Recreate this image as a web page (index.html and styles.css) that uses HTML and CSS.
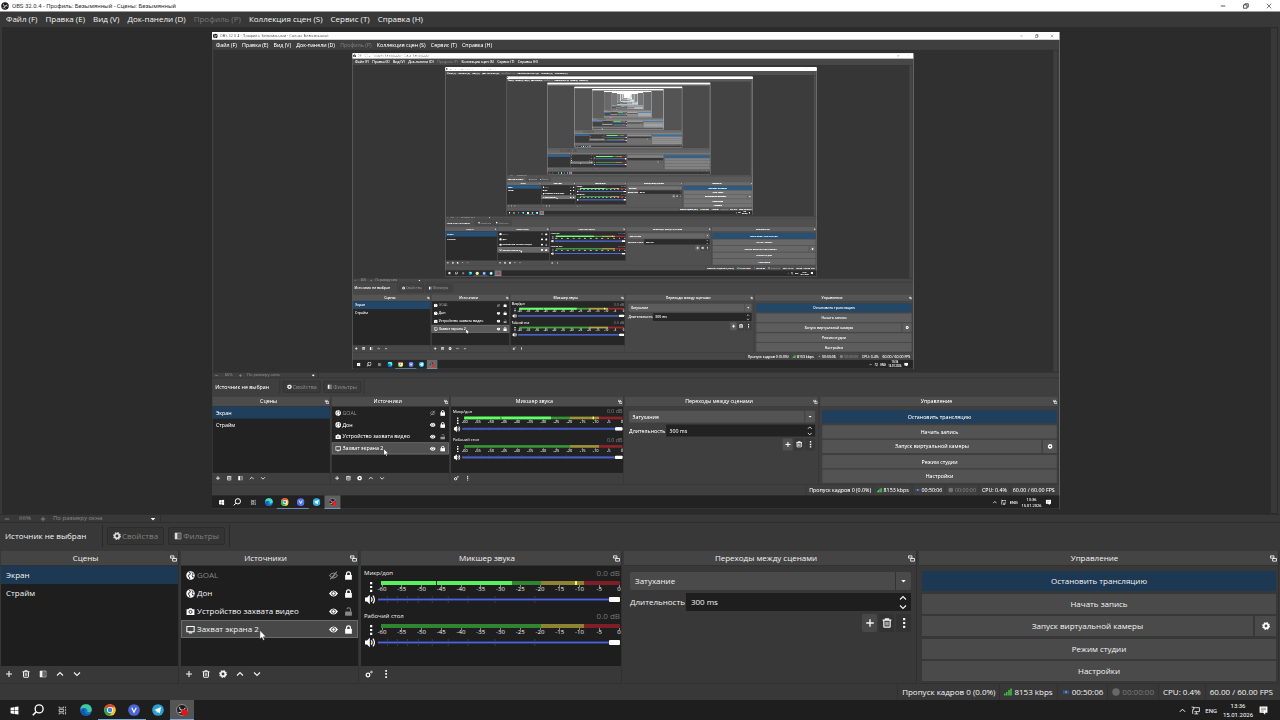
FILE: index.html
```html
<!DOCTYPE html>
<html lang="ru">
  <head>
    <meta charset="utf-8" />
    <title>OBS 32.0.4 - Профиль: Безымянный - Сцены: Безымянный</title>
    <link rel="stylesheet" href="styles.css">
  </head>
  <body>
    <svg class="sprite" aria-hidden="true">
      <symbol id="i-obs" viewBox="0 0 16 16"><circle cx="8" cy="8" r="7.5" fill="#1c1a1d"/><path d="M5 3.5a3.4 3.4 0 0 0 3 4.6 3.4 3.4 0 0 0 4-3.600M13 9a3.400 3.400 0 0 0-5-1 3.400 3.400 0 0 0 .6 5.200M3 11.500a3.400 3.400 0 0 0 4.800-3.300" fill="none" stroke="#c8c6c8" stroke-width="1.600"/></symbol>
      <symbol id="i-plus" viewBox="0 0 16 16"><path d="M8 2v12M2 8h12" fill="none" stroke="currentColor" stroke-width="2.2"/></symbol>
      <symbol id="i-minus" viewBox="0 0 16 16"><path d="M2 8h12" fill="none" stroke="currentColor" stroke-width="2.2"/></symbol>
      <symbol id="i-trash" viewBox="0 0 16 16"><path d="M1 3.500h14M5.500 3V1.500h5V3M3 4v9.500q0 1 1 1h8q1 0 1-1V4" fill="none" stroke="currentColor" stroke-width="2"/><path d="M6.500 6v6M9.500 6v6" stroke="currentColor" stroke-width="1.600"/></symbol>
      <symbol id="i-filter" viewBox="0 0 16 16"><path d="M2 2h12v12H2z" fill="none" stroke="currentColor" stroke-width="1.500" opacity=".7"/><path d="M2 2h5v12H2z" fill="currentColor"/><path d="M9 3h2v10H9z" fill="currentColor" opacity=".5"/></symbol>
      <symbol id="i-up" viewBox="0 0 16 16"><path d="M2 11l6-6 6 6" fill="none" stroke="currentColor" stroke-width="2.2"/></symbol>
      <symbol id="i-down" viewBox="0 0 16 16"><path d="M2 5l6 6 6-6" fill="none" stroke="currentColor" stroke-width="2.2"/></symbol>
      <symbol id="i-caret" viewBox="0 0 16 16"><path d="M2 5h12l-6 7z" fill="currentColor"/></symbol>
      <symbol id="i-gear" viewBox="0 0 16 16"><circle cx="8" cy="8" r="4.600" fill="none" stroke="currentColor" stroke-width="3.600"/><circle cx="8" cy="8" r="6.800" fill="none" stroke="currentColor" stroke-width="2.200" stroke-dasharray="2.800 2.540"/></symbol>
      <symbol id="i-gears" viewBox="0 0 16 16"><circle cx="6" cy="10" r="3.600" fill="none" stroke="currentColor" stroke-width="2.600"/><circle cx="13" cy="4" r="1.700" fill="none" stroke="currentColor" stroke-width="1.600"/><path d="M9 7l2-2" stroke="currentColor" stroke-width="1.500"/></symbol>
      <symbol id="i-dots" viewBox="0 0 16 16"><path d="M6.500 0h3.500v3.500H6.500zM6.500 6.200h3.500v3.500H6.500zM6.500 12.500h3.500V16H6.500z" fill="currentColor"/></symbol>
      <symbol id="i-globe" viewBox="0 0 16 16"><circle cx="8" cy="8" r="7.500" fill="currentColor"/><path d="M5 2.500l3 1-1 3-3 1 1 3 2 2-1 2M10 3l3 2-2 3 1 3 2-1" fill="none" stroke="#1e1e1e" stroke-width="1.500"/></symbol>
      <symbol id="i-camera" viewBox="0 0 16 16"><path d="M1 4h3.500l1.500-2h4l1.500 2H15v10H1z" fill="currentColor"/><circle cx="8" cy="8.700" r="2.700" fill="none" stroke="#1e1e1e" stroke-width="1.500"/></symbol>
      <symbol id="i-screen" viewBox="0 0 16 16"><path d="M1.500 2.500h13v9.500h-13z" fill="none" stroke="currentColor" stroke-width="1.800"/><path d="M5 14h6" stroke="currentColor" stroke-width="2"/></symbol>
      <symbol id="i-eye" viewBox="0 0 16 16"><path d="M0 8Q8-3 16 8 8 19 0 8z" fill="currentColor"/><circle cx="8" cy="8" r="3.200" fill="none" stroke="#222" stroke-width="1.500"/></symbol>
      <symbol id="i-eye-off" viewBox="0 0 16 16"><path d="M1 8q7-9 14 0-7 9-14 0zM2 15L14 1M6 12l5-6" fill="none" stroke="currentColor" stroke-width="1.800"/></symbol>
      <symbol id="i-lock" viewBox="0 0 16 16"><path d="M2 7h12v8.500H2z" fill="currentColor"/><path d="M4.500 8V5a3.500 3.500 0 0 1 7 0v3" fill="none" stroke="currentColor" stroke-width="2.200"/></symbol>
      <symbol id="i-unlock" viewBox="0 0 16 16"><path d="M2 8h12v7.500H2z" fill="currentColor"/><path d="M5 4a3.300 3.300 0 0 1 6.500 0v4" fill="none" stroke="currentColor" stroke-width="1.800"/></symbol>
      <symbol id="i-speaker" viewBox="0 0 16 16"><path d="M0 5h3l4-4v14l-4-4H0z" fill="currentColor"/><path d="M9 5q2.500 3 0 6M11.500 2.500q4.500 5.500 0 11" fill="none" stroke="currentColor" stroke-width="1.800"/></symbol>
      <symbol id="i-float" viewBox="0 0 16 16"><path d="M1 2h8v5H1zM6 8h9v6H6z" fill="none" stroke="currentColor" stroke-width="2"/></symbol>
      <symbol id="i-signal" viewBox="0 0 16 16"><path d="M0 11h3v4H0zM4 8h3v7H4zM8.500 4h3v11h-3zM12.500 1h3v14h-3z" fill="#3fc43f"/></symbol>
      <symbol id="i-live" viewBox="0 0 16 16"><circle cx="8" cy="8" r="3" fill="#4a8fd8"/><path d="M4 4q-3 4 0 8M12 4q3 4 0 8" fill="none" stroke="#2f5f94" stroke-width="2"/></symbol>
      <symbol id="i-rec" viewBox="0 0 16 16"><circle cx="8" cy="8" r="7.500" fill="#686868"/></symbol>
      <symbol id="i-win" viewBox="0 0 16 16"><path d="M1 3l6-1v5.500H1zM8 1.900L15 1v6.500H8zM1 8.500h6V14l-6-1zM8 8.500h7V15l-7-.9z" fill="#fff"/></symbol>
      <symbol id="i-search" viewBox="0 0 16 16"><circle cx="9.500" cy="6.500" r="5.300" fill="none" stroke="#fff" stroke-width="1.800"/><path d="M5.500 10.500L1 15" stroke="#fff" stroke-width="2"/></symbol>
      <symbol id="i-tasks" viewBox="0 0 16 16"><path d="M2 1v2.500h8V1M2 15v-2.500h8V15M2 6h8v4H2zM13.500 1v3M13.500 5.500v3M13.500 10v5" fill="none" stroke="#ddd" stroke-width="1.400"/></symbol>
      <symbol id="i-edge" viewBox="0 0 16 16"><circle cx="8" cy="8" r="7.800" fill="#1577c8"/><path d="M.4 7A7.700 7.700 0 0 1 15.700 7c.2 3-2.200 4.200-4.700 3.800-2-.4-1-1.300-1-2.300 0-3-6-4.500-9.600-1.500z" fill="#3fc9a0"/><path d="M1 11C2 6 6 5.500 7.500 6.500 5 8 5.500 12 9 13.500c2 .6 4 0 5-.8C10 18 3 16 1 11z" fill="#1556a8"/></symbol>
      <symbol id="i-chrome" viewBox="0 0 16 16"><circle cx="8" cy="8" r="7.800" fill="#f4c22c"/><path d="M8 8L1.200 4.200A7.800 7.800 0 0 1 14.800 4.200H8z" fill="#e0402f"/><path d="M8 8L1.200 4.200A7.800 7.800 0 0 0 7.500 15.800L11 10z" fill="#2fa04e"/><circle cx="8" cy="8" r="4" fill="#fff"/><circle cx="8" cy="8" r="3" fill="#3f7fe8"/></symbol>
      <symbol id="i-v" viewBox="0 0 16 16"><circle cx="8" cy="8" r="7.800" fill="#4a66d8"/><path d="M5 5l3 6 3-6" fill="none" stroke="#fff" stroke-width="1.600"/></symbol>
      <symbol id="i-telegram" viewBox="0 0 16 16"><circle cx="8" cy="8" r="7.800" fill="#2c9fd2"/><path d="M3 8l9-4-1.500 8.500L8 10.500 6.500 12 6 9.200z" fill="#fff"/></symbol>
      <symbol id="i-obs-live" viewBox="0 0 16 16"><circle cx="8" cy="8" r="7.300" fill="#1d1b1e" stroke="#aaa" stroke-width="1"/><path d="M5 4a3 3 0 0 0 3 4 3 3 0 0 0 4-3M3.500 11A3 3 0 0 0 8 8" fill="none" stroke="#c8c6c8" stroke-width="1.500"/><circle cx="11.300" cy="11.300" r="4.300" fill="#e3131c"/></symbol>
      <symbol id="i-net" viewBox="0 0 16 16"><path d="M4 3h11v7H6M9.500 10v4M6 14h7M1 2h4v4H3v8" fill="none" stroke="#eee" stroke-width="1.500"/></symbol>
      <symbol id="i-note" viewBox="0 0 16 16"><path d="M1 1h14v11h-4v3.500L7.500 12H1z" fill="#fff"/><path d="M3.500 4h9M3.500 6.500h9M3.500 9h5" stroke="#555" stroke-width="1"/></symbol>
      <symbol id="i-restore" viewBox="0 0 16 16"><path d="M1.500 5h9v9h-9zM5 5V2h9v9h-3" fill="none" stroke="#222" stroke-width="2"/></symbol>
      <symbol id="i-close" viewBox="0 0 16 16"><path d="M2 2l12 12M14 2L2 14" stroke="#333" stroke-width="1.800"/></symbol>
      <symbol id="i-marks" viewBox="0 0 243 7" preserveAspectRatio="none"><path d="M9.500 0v7M19.500 0v7M29.500 0v7M40.500 0v7M54.500 0v7M70.500 0v7M90.500 0v7M117.500 0v7M157.500 0v7" stroke="#343d50" stroke-width="1"/></symbol>
    </svg>

    <div class="desktop">
      <header class="titlebar">
        <svg class="icon"><use href="#i-obs"/></svg>
        <span class="window-title">OBS 32.0.4 - Профиль: Безымянный - Сцены: Безымянный</span>
        <div class="window-buttons">
          <button aria-label="Свернуть"><svg class="icon"><use href="#i-minus"/></svg></button>
          <button aria-label="Восстановить"><svg class="icon"><use href="#i-restore"/></svg></button>
          <button aria-label="Закрыть"><svg class="icon"><use href="#i-close"/></svg></button>
        </div>
      </header>
      <nav class="menubar">
        <button>Файл (F)</button>
        <button>Правка (E)</button>
        <button>Вид (V)</button>
        <button>Док-панели (D)</button>
        <button disabled>Профиль (P)</button>
        <button>Коллекция сцен (S)</button>
        <button>Сервис (T)</button>
        <button>Справка (H)</button>
      </nav>

      <main class="preview">
        <div class="canvas"><div class="capture"></div></div>
        <div class="scrollbar"></div>
      </main>
      <div class="zoombar">
        <button aria-label="Уменьшить"><svg class="icon"><use href="#i-minus"/></svg></button>
        <span class="zoom-value">66%</span>
        <button aria-label="Увеличить"><svg class="icon"><use href="#i-plus"/></svg></button>
        <button class="zoom-mode">По размеру окна <svg class="icon"><use href="#i-caret"/></svg></button>
      </div>
      <div class="context">
        <span class="context-name">Источник не выбран</span>
        <button class="context-button" disabled><svg class="icon"><use href="#i-gear"/></svg>Свойства</button>
        <button class="context-button" disabled><svg class="icon"><use href="#i-filter"/></svg>Фильтры</button>
        <span class="context-end"></span>
      </div>

      <div class="docks">
        <section class="dock">
          <h2 class="dock-title"><span>Сцены</span><svg class="icon"><use href="#i-float"/></svg></h2>
          <ul class="list">
            <li class="row selected-scene">Экран</li>
            <li class="row">Страйм</li>
          </ul>
          <div class="toolbar">
            <button aria-label="Добавить"><svg class="icon"><use href="#i-plus"/></svg></button>
            <button aria-label="Удалить"><svg class="icon"><use href="#i-trash"/></svg></button>
            <button aria-label="Фильтры"><svg class="icon"><use href="#i-filter"/></svg></button>
            <button aria-label="Вверх"><svg class="icon"><use href="#i-up"/></svg></button>
            <button aria-label="Вниз"><svg class="icon"><use href="#i-down"/></svg></button>
          </div>
        </section>

        <section class="dock">
          <h2 class="dock-title"><span>Источники</span><svg class="icon"><use href="#i-float"/></svg></h2>
          <ul class="list">
            <li class="row source muted"><svg class="icon kind"><use href="#i-globe"/></svg><span>GOAL</span>
              <button aria-label="Показать"><svg class="icon"><use href="#i-eye-off"/></svg></button><button class="lock" aria-label="Разблокировать"><svg class="icon"><use href="#i-lock"/></svg></button></li>
            <li class="row source"><svg class="icon kind"><use href="#i-globe"/></svg><span>Дон</span>
              <button aria-label="Скрыть"><svg class="icon"><use href="#i-eye"/></svg></button><button class="lock" aria-label="Разблокировать"><svg class="icon"><use href="#i-lock"/></svg></button></li>
            <li class="row source"><svg class="icon kind"><use href="#i-camera"/></svg><span>Устройство захвата видео</span>
              <button aria-label="Скрыть"><svg class="icon"><use href="#i-eye"/></svg></button><button class="lock unlocked" aria-label="Заблокировать"><svg class="icon"><use href="#i-unlock"/></svg></button></li>
            <li class="row source selected-source"><svg class="icon kind"><use href="#i-screen"/></svg><span>Захват экрана 2</span>
              <button aria-label="Скрыть"><svg class="icon"><use href="#i-eye"/></svg></button><button class="lock" aria-label="Разблокировать"><svg class="icon"><use href="#i-lock"/></svg></button>
              <svg class="cursor" viewBox="0 0 8 12"><path d="M1 0v10l2.300-2 1.500 3.500 1.500-.7L4.900 7.500H8z" fill="#fff" stroke="#222" stroke-width=".5"/></svg></li>
          </ul>
          <div class="toolbar">
            <button aria-label="Добавить"><svg class="icon"><use href="#i-plus"/></svg></button>
            <button aria-label="Удалить"><svg class="icon"><use href="#i-trash"/></svg></button>
            <button aria-label="Свойства"><svg class="icon"><use href="#i-gear"/></svg></button>
            <button aria-label="Вверх"><svg class="icon"><use href="#i-up"/></svg></button>
            <button aria-label="Вниз"><svg class="icon"><use href="#i-down"/></svg></button>
          </div>
        </section>

        <section class="dock">
          <h2 class="dock-title"><span>Микшер звука</span><svg class="icon"><use href="#i-float"/></svg></h2>
          <div class="list mixer">
            <div class="channel">
              <div class="channel-head"><span>Микр/доп</span><output>0.0 dB</output></div>
              <button class="channel-menu" aria-label="Меню"><svg class="icon"><use href="#i-dots"/></svg></button>
              <div class="meter"><div class="bar"><i class="level"></i><i class="hold"></i><i class="peak"></i></div><div class="scale"><span>-60</span><span>-55</span><span>-50</span><span>-45</span><span>-40</span><span>-35</span><span>-30</span><span>-25</span><span>-20</span><span>-15</span><span>-10</span><span>-5</span><span>0</span></div></div>
              <button class="mute" aria-label="Выключить звук"><svg class="icon"><use href="#i-speaker"/></svg></button>
              <div class="fader"><svg><use href="#i-marks"/></svg><input type="range" value="100" aria-label="Громкость: Микр/доп"></div>
            </div>
            <div class="channel">
              <div class="channel-head"><span>Рабочий стол</span><output>0.0 dB</output></div>
              <button class="channel-menu" aria-label="Меню"><svg class="icon"><use href="#i-dots"/></svg></button>
              <div class="meter"><div class="bar"></div><div class="scale"><span>-60</span><span>-55</span><span>-50</span><span>-45</span><span>-40</span><span>-35</span><span>-30</span><span>-25</span><span>-20</span><span>-15</span><span>-10</span><span>-5</span><span>0</span></div></div>
              <button class="mute" aria-label="Выключить звук"><svg class="icon"><use href="#i-speaker"/></svg></button>
              <div class="fader"><svg><use href="#i-marks"/></svg><input type="range" value="100" aria-label="Громкость: Рабочий стол"></div>
            </div>
          </div>
          <div class="toolbar">
            <button aria-label="Расширенные свойства"><svg class="icon"><use href="#i-gears"/></svg></button>
            <button aria-label="Меню"><svg class="icon"><use href="#i-dots"/></svg></button>
          </div>
        </section>

        <section class="dock">
          <h2 class="dock-title"><span>Переходы между сценами</span><svg class="icon"><use href="#i-float"/></svg></h2>
          <div class="transitions">
            <div class="combo">
              <select aria-label="Переход"><option>Затухание</option></select>
              <svg class="icon"><use href="#i-caret"/></svg>
            </div>
            <label class="duration">Длительность
              <span class="spin"><input type="text" value="300 ms"><span class="arrows"><svg class="icon"><use href="#i-up"/></svg><svg class="icon"><use href="#i-down"/></svg></span></span>
            </label>
            <div class="transition-buttons">
              <button class="add" aria-label="Добавить"><svg class="icon"><use href="#i-plus"/></svg></button>
              <button aria-label="Удалить"><svg class="icon"><use href="#i-trash"/></svg></button>
              <button aria-label="Меню"><svg class="icon"><use href="#i-dots"/></svg></button>
            </div>
          </div>
        </section>

        <section class="dock">
          <h2 class="dock-title"><span>Управление</span><svg class="icon"><use href="#i-float"/></svg></h2>
          <div class="controls">
            <button class="active">Остановить трансляцию</button>
            <button>Начать запись</button>
            <div class="virtual-camera">
              <button>Запуск виртуальной камеры</button>
              <button class="config" aria-label="Настройки виртуальной камеры"><svg class="icon"><use href="#i-gear"/></svg></button>
            </div>
            <button>Режим студии</button>
            <button>Настройки</button>
          </div>
        </section>
      </div>

      <footer class="statusbar">
        <span>Пропуск кадров 0 (0.0%)</span>
        <span><svg class="icon"><use href="#i-signal"/></svg>8153 kbps</span>
        <span><svg class="icon"><use href="#i-live"/></svg>00:50:06</span>
        <span class="idle"><svg class="icon"><use href="#i-rec"/></svg>00:00:00</span>
        <span>CPU: 0.4%</span>
        <span>60.00 / 60.00 FPS</span>
      </footer>

      <div class="taskbar">
        <button aria-label="Пуск"><svg class="icon small"><use href="#i-win"/></svg></button>
        <button aria-label="Поиск"><svg class="icon"><use href="#i-search"/></svg></button>
        <button aria-label="Представление задач"><svg class="icon small"><use href="#i-tasks"/></svg></button>
        <button aria-label="Edge"><svg class="icon"><use href="#i-edge"/></svg></button>
        <button class="running" aria-label="Chrome"><svg class="icon"><use href="#i-chrome"/></svg></button>
        <button class="running" aria-label="V"><svg class="icon"><use href="#i-v"/></svg></button>
        <button aria-label="Telegram"><svg class="icon"><use href="#i-telegram"/></svg></button>
        <button class="running current" aria-label="OBS"><svg class="icon"><use href="#i-obs-live"/></svg></button>
        <div class="tray">
          <svg class="icon"><use href="#i-up"/></svg>
          <svg class="icon net"><use href="#i-net"/></svg>
          <span>ENG</span>
          <time>13:36<br>15.01.2026</time>
          <svg class="icon note"><use href="#i-note"/></svg>
        </div>
      </div>
    </div>

    <script src="preview.js"></script>
  </body>
</html>
```

FILE: styles.css
```css
:root {
  --zoom: 0.662;
}
* {
  box-sizing: border-box;
}
body {
  margin: 0;
  overflow: hidden;
  background-color: #383838;
}
button, input, select {
  font: inherit;
  color: inherit;
  margin: 0;
  padding: 0;
  border: 0;
  background: none;
}
button {
  display: flex;
  align-items: center;
  justify-content: center;
  white-space: nowrap;
}
h2, ul {
  margin: 0;
  padding: 0;
  font-weight: normal;
  list-style: none;
}
.sprite {
  display: none;
}
.icon {
  width: 8px;
  height: 8px;
  flex: none;
}
.desktop {
  display: flex;
  flex-direction: column;
  width: 100vw;
  height: 100vh;
  font: 8px/12px 'Open Sans', 'Noto Sans', sans-serif;
  color: #f4f4f4;
  background-color: #383838;
}

/* window frame */
.titlebar {
  display: flex;
  align-items: center;
  flex: none;
  height: 12px;
  padding-left: 1px;
  gap: 3px;
  background-color: #fff;
  border-bottom: 1px solid #9a9a9a;
  color: #333;
  font-family: Roboto, sans-serif;
  font-size: 6px;
}
.window-title {
  flex: 1;
}
.window-buttons {
  display: flex;
}
.window-buttons button {
  width: 23px;
}
.window-buttons .icon {
  width: 6px;
  height: 6px;
}
.menubar {
  display: flex;
  flex: none;
  height: 15px;
  padding: 0 0 1px 6px;
  gap: 8px;
}
.menubar button:disabled {
  color: #777;
}

/* preview */
.preview {
  display: flex;
  flex: 1;
  min-height: 0;
  padding: 0 2px;
}
.canvas {
  display: flex;
  flex: 1;
  align-items: center;
  justify-content: center;
  min-width: 0;
  background-color: #2b2b2b;
}
.capture {
  flex: none;
  width: calc(100vw * var(--zoom));
  height: calc(100vh * var(--zoom));
  overflow: hidden;
  background-color: #777;
}
.capture .desktop {
  transform: scale(var(--zoom));
  transform-origin: 0 0;
  filter: brightness(1.12);
}
.scrollbar {
  width: 8px;
  border: 1px solid #2b2b2b;
}
.zoombar {
  display: flex;
  flex: none;
  align-items: center;
  height: 9px;
  padding-left: 4px;
  font-size: 6px;
  line-height: 7px;
  color: #8a8a8a;
  border-top: 1px solid #2e2e2e;
  border-bottom: 1px solid #2e2e2e;
}
.zoombar .icon {
  width: 6px;
  height: 6px;
}
.zoom-value {
  width: 30px;
  text-align: center;
}
.zoom-mode {
  width: 115px;
  padding: 0 4px 0 7px;
  justify-content: space-between;
  border-right: 1px solid #2e2e2e;
}
.zoom-mode .icon {
  color: #fff;
}
.context {
  display: flex;
  flex: none;
  align-items: center;
  height: 28px;
  padding: 0 0 2px 5px;
  gap: 4px;
}
.context-name {
  width: 98px;
  height: 22px;
  line-height: 22px;
  border-right: 1px solid #2a2a2a;
}
.context-button {
  width: 57px;
  height: 18px;
  gap: 1px;
  color: #808080;
  background-color: #343434;
  border: 1px solid #2c2c2c;
  border-radius: 2px;
}
.context-button .icon {
  color: #ddd;
}
.context-end {
  height: 22px;
  border-right: 1px solid #2a2a2a;
}

/* docks */
.docks {
  display: grid;
  flex: none;
  grid-template-columns: 178fr 178fr 261fr 293fr 360fr;
  gap: 2px;
  padding: 0 1px;
}
.dock {
  display: flex;
  flex-direction: column;
  min-width: 0;
  height: 133px;
  border-bottom: 1px solid #303030;
  border-right: 1px solid #303030;
}
.dock-title {
  display: flex;
  align-items: center;
  height: 15px;
  padding-right: 1px;
  font-size: 8px;
  text-align: center;
  background-color: #444;
  border-bottom: 1px solid #323232;
}
.dock-title span {
  flex: 1;
}
.dock-title .icon {
  width: 7px;
  height: 7px;
}
.list {
  flex: 1;
  background-color: #1e1e1e;
}
.row {
  display: flex;
  align-items: center;
  height: 18px;
  padding-left: 5px;
}
.selected-scene {
  background-color: #1c3852;
}
.source {
  position: relative;
  padding: 0 3px 0 5px;
  gap: 2px;
}
.source .icon {
  width: 9px;
  height: 9px;
  color: #fff;
}
.source span {
  flex: 1;
  white-space: nowrap;
}
.source button {
  width: 13px;
}
.source.muted span, .source.muted button:not(.lock) .icon, .unlocked .icon {
  color: #888;
}
.selected-source {
  background-color: #484848;
  outline: 1px solid #6a6a6a;
  outline-offset: -1px;
}
.cursor {
  position: absolute;
  left: 78px;
  top: 10px;
  width: 7px;
  height: 11px;
}
.toolbar {
  display: flex;
  align-items: center;
  height: 17px;
  padding-bottom: 1px;
  gap: 1px;
}
.toolbar button {
  width: 16px;
}

/* mixer */
.channel {
  display: grid;
  grid-template-columns: 13px 1fr;
  grid-template-rows: 14px 14px 10px;
  height: 43px;
  padding: 0 1px 0 3px;
  column-gap: 1px;
}
.channel-head {
  display: flex;
  grid-column: 1 / 3;
  justify-content: space-between;
  align-items: center;
  font-size: 6px;
}
.channel-head output {
  font-size: 8px;
  color: #777;
}
.meter {
  padding: 1px 0 0 3px;
}
.bar {
  position: relative;
  height: 4px;
  background: linear-gradient(to right, #318431 67%, #8c8432 67%, #8c8432 85%, #7d1f26 85%);
}
.bar i {
  position: absolute;
  top: 0;
  bottom: 0;
}
.level {
  left: 0;
  width: 55%;
  background: #58f05c;
}
.hold {
  left: 23%;
  width: 1px;
  background: #123;
}
.peak {
  left: 81%;
  width: 2px;
  background: #ffee58;
}
.scale {
  display: flex;
  justify-content: space-between;
  margin: 0 -8px;
  font-size: 6px;
  line-height: 8px;
}
.scale span {
  width: 18px;
  text-align: center;
  background: linear-gradient(#888, #888) center top / 1px 2px no-repeat;
}
.mute .icon {
  width: 11px;
  height: 11px;
}
.channel-menu .icon {
  width: 10px;
  height: 10px;
}
.mute, .channel-menu {
  color: #fff;
}
.fader {
  display: grid;
  align-items: center;
}
.fader svg, .fader input {
  grid-area: 1 / 1;
  width: 100%;
  min-width: 0;
  height: 7px;
}
.fader input {
  appearance: none;
}
.fader input::-webkit-slider-runnable-track {
  height: 3px;
  background-color: #5068c4;
  border: 1px solid #2b3a80;
  border-width: 1px 0;
}
.fader input::-webkit-slider-thumb {
  appearance: none;
  width: 11px;
  height: 5px;
  margin-top: -2px;
  background-color: #fff;
  border-radius: 1px;
}

/* transitions */
.transitions {
  display: flex;
  flex-direction: column;
  padding: 6px 5px 0 6px;
  gap: 3px;
}
.combo {
  display: grid;
  grid-template-columns: 1fr 16px;
  align-items: center;
  justify-items: center;
  height: 18px;
  background-color: #4a4a4a;
  border-radius: 2px;
}
.combo select {
  grid-area: 1 / 1 / 2 / 3;
  width: 100%;
  height: 18px;
  padding-left: 5px;
  appearance: none;
}
.combo .icon {
  grid-area: 1 / 2;
  width: 100%;
  height: 18px;
  padding: 6px 4px;
  border-left: 1px solid #333;
  pointer-events: none;
}
.duration {
  display: flex;
  align-items: center;
  gap: 1px;
}
.spin {
  display: flex;
  flex: 1;
  align-items: center;
  height: 18px;
  padding: 0 4px 0 5px;
  background-color: #1e1e1e;
}
.spin input {
  flex: 1;
  min-width: 0;
}
.arrows {
  display: flex;
  flex-direction: column;
  gap: 1px;
}
.transition-buttons {
  display: flex;
  justify-content: flex-end;
  gap: 2px;
}
.transition-buttons button {
  width: 15px;
  height: 18px;
  background-color: #323232;
  border-radius: 2px;
}
.transition-buttons button.add {
  background-color: #484848;
}
.transition-buttons .icon {
  width: 10px;
  height: 10px;
}

/* controls */
.controls {
  display: flex;
  flex: 1;
  flex-direction: column;
  justify-content: space-between;
  padding: 5px 2px 2px 3px;
}
.controls button {
  height: 20px;
  background-color: #4a4a4a;
}
.controls .active {
  background-color: #1c3852;
}
.virtual-camera {
  display: flex;
  gap: 2px;
}
.virtual-camera button {
  flex: 1;
}
.virtual-camera .config {
  flex: none;
  width: 21px;
  color: #fff;
}

/* status and taskbar */
.statusbar {
  display: flex;
  flex: none;
  justify-content: flex-end;
  height: 16px;
  padding-right: 3px;
}
.statusbar span {
  display: flex;
  align-items: center;
  padding: 0 4px;
  gap: 2px;
  border-left: 1px solid #303030;
}
.statusbar .idle {
  color: #7c7c7c;
}
.taskbar {
  display: flex;
  flex: none;
  height: 20px;
  padding-left: 2px;
  background-color: #1e1e1e;
  color: #fff;
}
.taskbar button {
  width: 24px;
  border: 0 solid #76a9d8;
}
.taskbar button .icon {
  width: 12px;
  height: 12px;
}
.taskbar button .small {
  width: 9px;
  height: 9px;
}
.taskbar .running {
  border-bottom-width: 1px;
  padding-top: 1px;
}
.taskbar .current {
  background-color: #555;
}
.tray {
  display: flex;
  flex: 1;
  align-items: center;
  justify-content: flex-end;
  padding-right: 12px;
  gap: 5px;
  font-size: 6px;
  line-height: 9px;
  font-family: Roboto, sans-serif;
}
.tray .icon {
  width: 7px;
  height: 7px;
}
.tray .net, .tray .note {
  width: 9px;
  height: 9px;
}
.tray time {
  width: 32px;
  text-align: center;
}
```

FILE: preview.js
```js
// the captured screen contains the preview itself, so nest copies of the desktop
var DEPTH = 13;
var TEXT_DEPTH = 4;
var desktop = document.querySelector('.desktop');
var plain = desktop.cloneNode(true);
plain.setAttribute('inert', '');
plain.setAttribute('aria-hidden', 'true');

// below a certain size only the shapes are left
function clearText(root) {
  var walker = document.createTreeWalker(root, NodeFilter.SHOW_TEXT);
  while (walker.nextNode()) walker.currentNode.data = '';
  root.querySelectorAll('input[type=text]').forEach(function (input) {
    input.setAttribute('value', '');
  });
}

var screen = null;
for (var level = DEPTH; level > 0; level--) {
  var copy = plain.cloneNode(true);
  if (level > TEXT_DEPTH) clearText(copy);
  if (screen) copy.querySelector('.capture').appendChild(screen);
  screen = copy;
}
desktop.querySelector('.capture').appendChild(screen);
```
